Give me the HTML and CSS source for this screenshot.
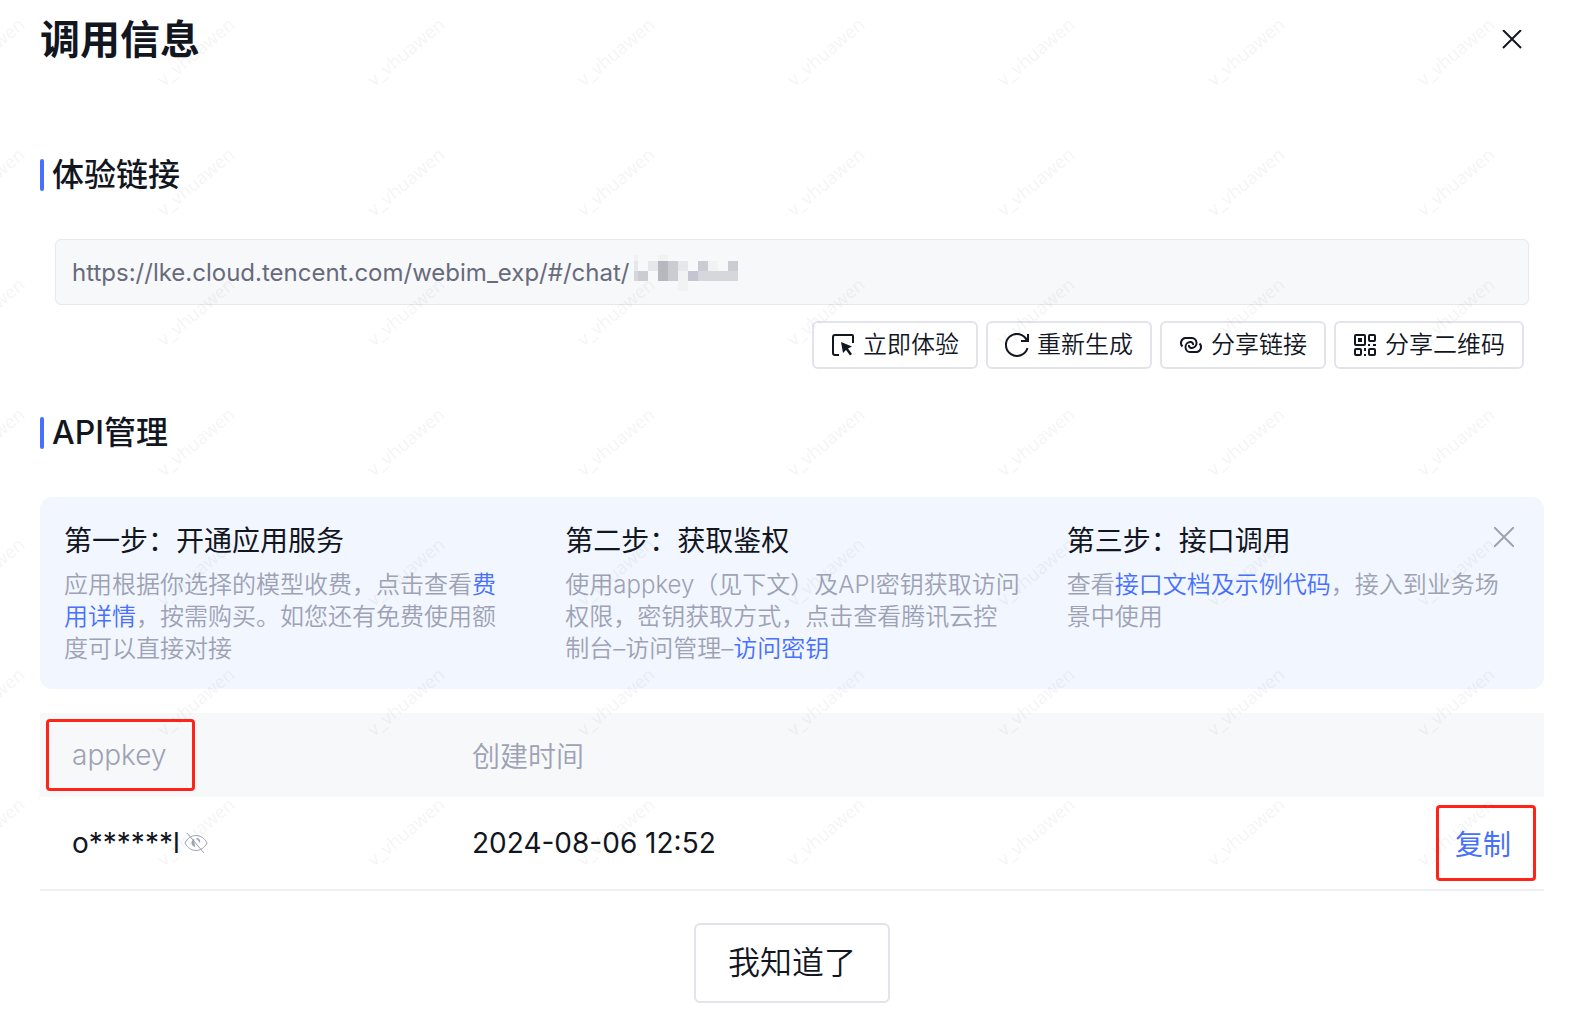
FILE: index.html
```html
<!DOCTYPE html>
<html lang="zh-CN">
<head>
  <meta charset="UTF-8">
  <meta name="viewport" content="width=device-width, initial-scale=1.0">
  <title>调用信息</title>
  <link rel="stylesheet" href="styles.css">
</head>
<body>
  <main>
    <div class="dialog">
      <header class="dialog-header">
        <h1>调用信息</h1>
        <button type="button" class="icon-btn" aria-label="关闭">
          <svg width="20" height="20" viewBox="0 0 20 20"><path d="M1 0l18 18M19 0L1 18"/></svg>
        </button>
      </header>

      <section class="link-section">
        <h2><label for="link-url">体验链接</label></h2>
        <div class="link-box">
          <input type="text" id="link-url" value="https://lke.cloud.tencent.com/webim_exp/#/chat/" readonly>
          <svg class="mosaic" width="104" height="36" viewBox="0 0 104 36" shape-rendering="crispEdges">
            <path fill="#f1f2f4" d="M0 0h4v6H0zM24 0h10v6H24zM44 16h10v20H44zM74 6h10v10H74z"/>
            <path fill="#e6e7eb" d="M0 6h4v10H0zM14 6h10v10H14zM44 6h10v10H44z"/>
            <path fill="#cbccd2" d="M4 16h10v10H4zM34 6h10v20H34zM64 6h10v10H64zM94 6h10v10H94z"/>
            <path fill="#c3c6d2" d="M54 16h10v10H54z"/>
            <path fill="#b6b8bf" d="M24 6h10v20H24z"/>
            <path fill="#d6d7dc" d="M0 16h4v10H0zM64 16h40v10H64z"/>
          </svg>
        </div>
        <div class="actions">
          <button type="button" class="btn">
            <svg width="24" height="24" viewBox="0 0 24 24"><path d="M8 22H4a2 2 0 0 1-2-2V4a2 2 0 0 1 2-2h17a1 1 0 0 1 1 1v7"/><path class="fill" d="M10 9l11 4.500-4 2 4 5.500-2 1.500-4-5.500-3 3z"/></svg>
            立即体验
          </button>
          <button type="button" class="btn">
            <svg width="24" height="24" viewBox="0 0 24 24"><path d="M22.500 15A11 11 0 1 1 22 7.500M23 1v7h-7"/></svg>
            重新生成
          </button>
          <button type="button" class="btn">
            <svg width="24" height="24" viewBox="0 0 24 24"><path d="M3.500 13.500A5 5 0 0 1 6 5h6a5 5 0 0 1 1 10h-1a2.500 2.500 0 0 1-2-3M20.500 10.500A5 5 0 0 1 18 19h-6a5 5 0 0 1-1-10h1a2.500 2.500 0 0 1 2 3"/></svg>
            分享链接
          </button>
          <button type="button" class="btn">
            <svg width="24" height="24" viewBox="0 0 24 24"><rect x="2" y="2" width="10" height="10" rx="1"/><rect x="16" y="2" width="6" height="6" rx="1"/><rect x="2" y="16" width="6" height="6" rx="1"/><rect x="16" y="16" width="6" height="6" rx="1"/><path d="M12 15v3M12 21v2M15 12h2M20 12h3"/><path class="fill" d="M5 5h4v4H5z"/></svg>
            分享二维码
          </button>
        </div>
      </section>

      <section class="api-section">
        <h2>API管理</h2>
        <div class="steps">
          <div class="step">
            <h3>第一步：开通应用服务</h3>
            <p>应用根据你选择的模型收费，点击查看<a href="#price">费用详情</a>，按需购买。如您还有免费使用额度可以直接对接</p>
          </div>
          <div class="step">
            <h3>第二步：获取鉴权</h3>
            <p>使用appkey（见下文）及API密钥获取访问权限，密钥获取方式，点击查看腾讯云控制台–访问管理–<a href="#secret">访问密钥</a></p>
          </div>
          <div class="step">
            <h3>第三步：接口调用</h3>
            <p>查看<a href="#docs">接口文档及示例代码</a>，接入到业务场景中使用</p>
          </div>
          <button type="button" class="icon-btn steps-close" aria-label="收起">
            <svg width="20" height="20" viewBox="0 0 20 20"><path d="M0 0l20 20M20 0L0 20"/></svg>
          </button>
        </div>

        <table>
          <thead>
            <tr>
              <th class="col-key"><span class="mark mark-key">appkey</span></th>
              <th>创建时间</th>
              <th></th>
            </tr>
          </thead>
          <tbody>
            <tr>
              <td class="col-key">
                <div class="key">
                  <span>o******l</span>
                  <button type="button" class="icon-btn eye" aria-label="显示appkey">
                    <svg width="24" height="20" viewBox="0 0 24 20"><path d="M1 10c5-10 17-10 22 0-5 10-17 10-22 0zM3 0l17 20"/><path class="fill" d="M10 6c-4 2-3 7 1 8zM12 5l4 5c1-3-1-5-4-5z"/></svg>
                  </button>
                </div>
              </td>
              <td>2024-08-06 12:52</td>
              <td class="col-action"><button type="button" class="mark mark-copy">复制</button></td>
            </tr>
          </tbody>
        </table>
      </section>

      <svg class="watermark" aria-hidden="true">
        <defs>
          <pattern id="wm" x="148" y="-45" width="210" height="130" patternUnits="userSpaceOnUse">
            <text x="16" y="132" transform="rotate(-40 16 132)">v_vhuawen</text>
          </pattern>
        </defs>
        <rect width="100%" height="100%" fill="url(#wm)"/>
      </svg>
    </div>

    <footer>
      <button type="button" class="btn btn-ok">我知道了</button>
    </footer>
  </main>
</body>
</html>
```
FILE: styles.css
```css
* {
  box-sizing: border-box;
}

body {
  margin: 0;
  background: #fff;
  color: #12161f;
  font-family: Inter, 'Noto Sans CJK SC', sans-serif;
}

h1, h2, h3, p {
  margin: 0;
}

a {
  color: #4770ff;
  text-decoration: none;
}

button, input {
  font-family: inherit;
  color: inherit;
}

button {
  background: none;
  border: none;
  padding: 0;
  cursor: pointer;
}

svg {
  display: block;
  fill: none;
  stroke: currentColor;
  stroke-width: 2;
}

svg .fill {
  fill: currentColor;
  stroke: none;
}

.dialog {
  position: relative;
  padding: 0 36px 0 40px;
}

.dialog-header {
  display: flex;
  justify-content: space-between;
  align-items: center;
  height: 80px;
  padding-right: 22px;
}

h1 {
  font-size: 40px;
  line-height: 56px;
  font-weight: 600;
}

h2 {
  display: flex;
  align-items: center;
  gap: 8px;
  height: 32px;
  font-size: 32px;
  line-height: 32px;
  font-weight: 500;
}

h2::before {
  content: '';
  width: 4px;
  height: 32px;
  border-radius: 2px;
  background: #4770ff;
}

.link-section {
  padding-top: 79px;
}

.link-box {
  position: relative;
  margin: 48px 15px 0;
}

.link-box input {
  display: block;
  width: 100%;
  height: 66px;
  padding: 0 16px;
  border: 1px solid #e7e8ec;
  border-radius: 6px;
  background: #f7f8fa;
  color: #676b7c;
  font-size: 24px;
  outline: none;
}

.mosaic {
  position: absolute;
  left: 579px;
  top: 16px;
  stroke: none;
}

.actions {
  display: flex;
  justify-content: flex-end;
  gap: 8px;
  padding: 16px 20px 0 0;
}

.btn {
  display: flex;
  align-items: center;
  gap: 8px;
  height: 48px;
  padding: 0 17px;
  border: 2px solid #e3e4eb;
  border-radius: 6px;
  background: #fff;
  font-size: 24px;
  font-weight: 350;
  line-height: 32px;
}

.api-section {
  padding-top: 48px;
}

.steps {
  position: relative;
  display: grid;
  grid-template-columns: repeat(3, 1fr);
  margin-top: 48px;
  padding: 24px 0;
  border-radius: 12px;
  background: #f2f6ff;
}

.step {
  padding: 0 22px 0 24px;
}

.step h3 {
  margin-bottom: 8px;
  font-size: 28px;
  line-height: 40px;
  font-weight: 400;
}

.step p {
  color: #9da2b4;
  font-size: 24px;
  font-weight: 350;
  line-height: 32px;
}

.steps-close {
  position: absolute;
  right: 30px;
  top: 30px;
  color: #9da2b4;
}

table {
  width: 100%;
  margin-top: 24px;
  border-collapse: separate;
  border-spacing: 0;
  table-layout: fixed;
  font-size: 28px;
}

th, td {
  padding: 0;
  text-align: left;
  font-weight: 400;
}

th {
  height: 84px;
  background: #f7f8fa;
  color: #9da2b4;
  font-weight: 350;
}

td {
  height: 94px;
  border-bottom: 2px solid #eeeff1;
}

.col-key {
  width: 432px;
}

.key {
  display: flex;
  align-items: center;
  gap: 4px;
  padding-left: 32px;
}

.eye {
  color: #9da2b4;
}

.eye svg {
  stroke-width: 1;
}

.mark {
  display: flex;
  align-items: center;
  border: 3px solid #ff2417;
  border-radius: 4px;
}

.mark-key {
  width: 149px;
  height: 72px;
  margin-left: 6px;
  padding-left: 23px;
}

.mark-copy {
  width: 100px;
  height: 76px;
  margin: 0 8px 0 auto;
  padding-left: 16px;
  color: #4770ff;
  font-size: 28px;
}

footer {
  display: flex;
  justify-content: center;
  padding: 32px 36px 8px 40px;
}

.btn-ok {
  height: 80px;
  padding: 0 32px;
  font-size: 32px;
}

/* tiled user name over the dialog body */
.watermark {
  position: absolute;
  inset: 0;
  width: 100%;
  height: 100%;
  stroke: none;
  pointer-events: none;
}

.watermark text {
  fill: #000;
  fill-opacity: 0.04;
  font-family: 'Noto Sans', sans-serif;
  font-size: 18px;
}
```
